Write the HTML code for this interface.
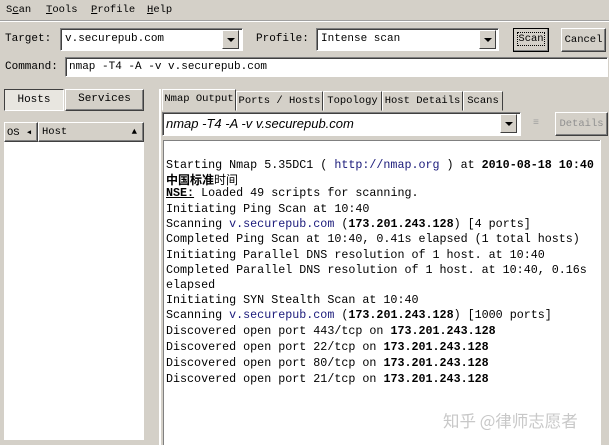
<!DOCTYPE html>
<html><head><meta charset="utf-8"><style>
*{margin:0;padding:0;box-sizing:border-box}
body{width:609px;height:445px;background:#d4d0c8;position:relative;overflow:hidden;font-family:"Liberation Mono","Noto Sans CJK SC",monospace;font-size:11.7px;color:#000}
.a{position:absolute;white-space:nowrap}
.sunk{position:absolute;background:#fff;border:1px solid;border-color:#808080 #fff #fff #808080;box-shadow:inset 1px 1px 0 #404040}
.btn{position:absolute;background:#d4d0c8;border:1px solid;border-color:#fff #404040 #404040 #fff;box-shadow:inset -1px -1px 0 #808080;text-align:center;white-space:nowrap}
.dd{position:absolute;width:17px;height:19px;background:#d4d0c8;border:1px solid;border-color:#fff #404040 #404040 #fff}
.dd:after{content:"";position:absolute;left:4px;top:7px;border:4px solid transparent;border-top:4px solid #000;border-bottom:0}
.tab{position:absolute;top:91px;height:20px;border:1px solid;border-color:#fff #404040 #d4d0c8 #fff;padding-top:3px;font-size:10.5px;text-align:center;white-space:nowrap;overflow:hidden}
.o{position:absolute;left:166px;white-space:nowrap}
.m{position:absolute;top:4px;font-size:10.5px;white-space:nowrap}
b{font-weight:bold}
.l{color:#1a1a7a}
</style></head><body>
<div class="m" style="left:6px">S<u>c</u>an</div>
<div class="m" style="left:46px"><u>T</u>ools</div>
<div class="m" style="left:91px"><u>P</u>rofile</div>
<div class="m" style="left:147px"><u>H</u>elp</div>
<div style="position:absolute;left:0;top:20px;width:609px;height:1px;background:#a0a0a0"></div>
<div style="position:absolute;left:0;top:21px;width:609px;height:1px;background:#fff"></div>

<div class="a" style="left:5px;top:33px;font-size:11px">Target:</div>
<div class="sunk" style="left:60px;top:28px;width:183px;height:23px"></div>
<div class="a" style="left:65px;top:33px;font-size:11px">v.securepub.com</div>
<div class="dd" style="left:222px;top:30px"></div>
<div class="a" style="left:256px;top:33px;font-size:11px">Profile:</div>
<div class="sunk" style="left:316px;top:28px;width:183px;height:23px"></div>
<div class="a" style="left:321px;top:33px;font-size:11px">Intense scan</div>
<div class="dd" style="left:479px;top:30px"></div>
<div class="btn" style="left:513px;top:28px;width:36px;height:24px;border-color:#000;padding-top:4px;font-size:10.5px"><span style="outline:1px dotted #000">Scan</span></div>
<div class="btn" style="left:561px;top:28px;width:45px;height:24px;padding-top:5px;font-size:10.5px">Cancel</div>

<div class="a" style="left:5px;top:61px;font-size:11px">Command:</div>
<div class="sunk" style="left:65px;top:57px;width:543px;height:20px"></div>
<div class="a" style="left:69px;top:61px;font-size:11px">nmap -T4 -A -v v.securepub.com</div>

<div class="btn" style="left:4px;top:89px;width:60px;height:22px;background:#e8e6e0;border-color:#404040 #fff #fff #404040;box-shadow:none;padding-top:4px;font-size:11px">Hosts</div>
<div class="btn" style="left:65px;top:89px;width:79px;height:22px;padding-top:3px;font-size:11px">Services</div>
<div class="btn" style="left:4px;top:122px;width:34px;height:20px;padding-top:3px;text-align:left;padding-left:2px;font-size:10.5px">OS ◂</div>
<div class="btn" style="left:38px;top:122px;width:106px;height:20px;padding-top:3px;text-align:left;padding-left:3px;font-size:10.5px">Host<span style="position:absolute;right:6px;font-size:9px;top:4px">▲</span></div>
<div style="position:absolute;left:4px;top:142px;width:140px;height:298px;background:#fff"></div>

<div style="position:absolute;left:159px;top:89px;width:2px;height:356px;background:#fff"></div>
<div class="tab" style="left:162px;top:89px;height:22px;width:74px">Nmap Output</div>
<div class="tab" style="left:236px;width:87px">Ports / Hosts</div>
<div class="tab" style="left:323px;width:59px">Topology</div>
<div class="tab" style="left:382px;width:81px">Host Details</div>
<div class="tab" style="left:463px;width:40px">Scans</div>
<div class="sunk" style="left:162px;top:112px;width:359px;height:24px"></div>
<div class="a" style="left:166px;top:116px;font-family:'Liberation Sans',sans-serif;font-style:italic;font-size:13px">nmap -T4 -A -v v.securepub.com</div>
<div class="dd" style="left:500px;top:114px"></div>
<div class="a" style="left:533px;top:118px;color:#a0a0a0;font-size:10px">≡</div>
<div class="btn" style="left:555px;top:112px;width:53px;height:24px;padding-top:5px;color:#909090;font-size:10.5px">Details</div>

<div style="position:absolute;left:163px;top:140px;width:437px;height:305px;background:#fff;border-left:1px solid #808080;border-top:1px solid #808080"></div>
<div style="position:absolute;left:600px;top:140px;width:9px;height:305px;background:#d4d0c8;border-left:1px solid #fff"></div>

<div class="o" style="top:158px">Starting Nmap 5.35DC1 ( <span class="l">http://nmap.org</span> ) at <b>2010-08-18 10:40</b></div>
<div class="o" style="top:171px;font-family:'Noto Sans CJK SC',sans-serif;font-size:12px"><b>中国标准</b>时间</div>
<div class="o" style="top:186px"><b><u>NSE:</u></b> Loaded 49 scripts for scanning.</div>
<div class="o" style="top:202px">Initiating Ping Scan at 10:40</div>
<div class="o" style="top:217px">Scanning <span class="l">v.securepub.com</span> (<b>173.201.243.128</b>) [4 ports]</div>
<div class="o" style="top:232px">Completed Ping Scan at 10:40, 0.41s elapsed (1 total hosts)</div>
<div class="o" style="top:248px">Initiating Parallel DNS resolution of 1 host. at 10:40</div>
<div class="o" style="top:263px">Completed Parallel DNS resolution of 1 host. at 10:40, 0.16s</div>
<div class="o" style="top:278px">elapsed</div>
<div class="o" style="top:293px">Initiating SYN Stealth Scan at 10:40</div>
<div class="o" style="top:308px">Scanning <span class="l">v.securepub.com</span> (<b>173.201.243.128</b>) [1000 ports]</div>
<div class="o" style="top:324px">Discovered open port 443/tcp on <b>173.201.243.128</b></div>
<div class="o" style="top:340px">Discovered open port 22/tcp on <b>173.201.243.128</b></div>
<div class="o" style="top:356px">Discovered open port 80/tcp on <b>173.201.243.128</b></div>
<div class="o" style="top:372px">Discovered open port 21/tcp on <b>173.201.243.128</b></div>

<div class="a" style="left:443px;top:408px;font-family:'Noto Sans CJK SC',sans-serif;font-size:16.5px;color:#c8c8c8">知乎 @律师志愿者</div>
</body></html>
